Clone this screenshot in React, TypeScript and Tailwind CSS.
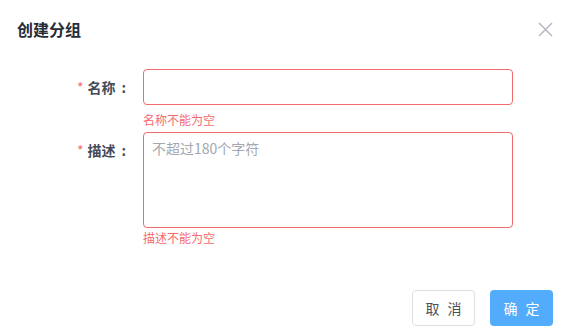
import React from "react";

const font = { fontFamily: '"Noto Sans CJK SC", "Noto Sans", sans-serif' };

export default function App() {
  return (
    <div className="w-[569px] h-[336px] bg-white flex flex-col" style={font}>
      <div className="flex items-center justify-between pl-[17px] pr-[16px] pt-[20px]">
        <div className="text-[16px] leading-[18px] font-bold text-[#262c36]">创建分组</div>
        <svg width="15" height="15" viewBox="0 0 15 15" className="block">
          <path d="M1 1 L14 14 M14 1 L1 14" stroke="#b4b9c3" strokeWidth="1.5" fill="none" />
        </svg>
      </div>

      <div className="flex flex-col mt-[31px]">
        <div className="flex items-center">
          <div className="w-[143px] pr-[17px] text-right text-[14px] font-bold text-[#454b56] leading-[20px]">
            <span className="text-[#f56c6c] mr-[4px] font-normal">*</span>名称<span className="ml-[6px]">:</span>
          </div>
          <div className="w-[370px] h-[36px] border border-[#f56c6c] rounded-[4px] bg-white"></div>
        </div>
        <div className="pl-[143px] mt-[7px] mb-[4px] text-[12px] leading-[16px] text-[#f56c6c]">名称不能为空</div>

        <div className="flex items-start">
          <div className="w-[143px] pr-[17px] pt-[8px] text-right text-[14px] font-bold text-[#454b56] leading-[20px]">
            <span className="text-[#f56c6c] mr-[4px] font-normal">*</span>描述<span className="ml-[6px]">:</span>
          </div>
          <div className="w-[370px] h-[96px] border border-[#f56c6c] rounded-[4px] bg-white pl-[8px] pt-[5px] text-[14px] leading-[20px] text-[#a3a7b0]">
            不超过180个字符
          </div>
        </div>
        <div className="pl-[143px] mt-[2px] text-[12px] leading-[16px] text-[#f56c6c]">描述不能为空</div>
      </div>

      <div className="flex justify-end gap-[15px] pr-[16px] mt-[44px]">
        <div className="w-[63px] h-[36px] border border-[#dcdfe6] rounded-[4px] flex items-center justify-center gap-[8px] text-[14px] text-[#4a4f58]">
          <span>取</span><span>消</span>
        </div>
        <div className="w-[63px] h-[36px] rounded-[4px] bg-[#53acfb] flex items-center justify-center gap-[8px] text-[14px] text-white">
          <span>确</span><span>定</span>
        </div>
      </div>
    </div>
  );
}
